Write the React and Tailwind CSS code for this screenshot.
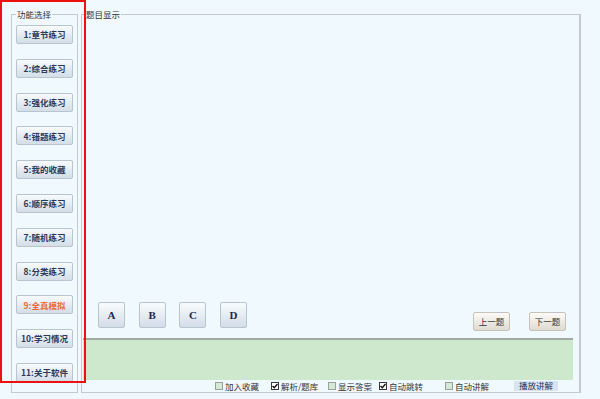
import React from "react";

const cjk = { fontFamily: '"Noto Sans CJK SC", "Noto Sans", sans-serif' };

const menu = [
  "1:章节练习",
  "2:综合练习",
  "3:强化练习",
  "4:错题练习",
  "5:我的收藏",
  "6:顺序练习",
  "7:随机练习",
  "8:分类练习",
  "9:全真模拟",
  "10:学习情况",
  "11:关于软件",
];

function Check({ checked }) {
  return (
    <span
      className={
        "flex h-[8px] w-[8px] shrink-0 items-center justify-center border " +
        (checked ? "border-[#3a3a3a] bg-white" : "border-[#9aa09a] bg-[#d5ead5]")
      }
    >
      {checked && (
        <svg width="6" height="6" viewBox="0 0 6 6">
          <path d="M0.5 3 L2.3 4.8 L5.5 1" stroke="#111" strokeWidth="1.4" fill="none" />
        </svg>
      )}
    </span>
  );
}

function Opt({ label, checked, w }) {
  return (
    <div className={"flex items-center gap-[2px] " + w}>
      <Check checked={checked} />
      <span className="text-[8.5px] leading-[12px] text-[#333]">{label}</span>
    </div>
  );
}

export default function App() {
  return (
    <div className="relative h-[399px] w-[600px] overflow-hidden bg-[#eff9fe]" style={cjk}>
      <div className="flex">
        <fieldset className="ml-[11px] mt-[8px] h-[385px] w-[66px] border border-[#c5cacd] px-[4px] pb-0 pt-0">
          <legend className="px-[1px] text-[8.5px] leading-[12px] text-[#333]">功能选择</legend>
          <div className="mt-[5px] flex flex-col gap-[14.8px]">
            {menu.map((m, i) => (
              <div
                key={m}
                className={
                  "flex h-[19px] w-[57px] items-center justify-center rounded-[2px] border border-[#b9c5ce] bg-gradient-to-b from-[#f8fbfd] to-[#d3dee7] text-[8.5px] font-bold " +
                  (i === 8 ? "text-[#f2683a]" : "text-[#2b3a5c]")
                }
              >
                {m}
              </div>
            ))}
          </div>
        </fieldset>
        <fieldset className="ml-[3px] mt-[8px] h-[385px] w-[500px] border border-r-2 border-[#c5cacd] pl-[3px] pr-0 pb-0 pt-0">
          <legend className="px-[1px] text-[8.5px] leading-[12px] text-[#333]">题目显示</legend>
          <div className="-ml-[3px] flex h-[372px] flex-col">
            <div className="flex-1" />
            <div className="flex items-start">
              <div className="ml-[16px] flex gap-[13.7px]">
                {["A", "B", "C", "D"].map((l) => (
                  <div
                    key={l}
                    className="flex h-[26px] w-[27px] items-center justify-center rounded-[2px] border border-[#b9c5ce] bg-gradient-to-b from-[#fafcfe] to-[#d2dde8] text-[11px] font-bold text-[#1b2850]"
                    style={{ fontFamily: '"Liberation Serif", serif' }}
                  >
                    {l}
                  </div>
                ))}
              </div>
              <div className="ml-auto mr-[13px] mt-[10px] flex gap-[19px]">
                {["上一题", "下一题"].map((t) => (
                  <div
                    key={t}
                    className="flex h-[19px] w-[37px] items-center justify-center rounded-[2px] border border-[#c8c3b9] bg-gradient-to-b from-[#fcfbf8] to-[#e0dbd1] text-[8.5px] text-[#333]"
                  >
                    {t}
                  </div>
                ))}
              </div>
            </div>
            <div className="ml-[1px] mr-[6px] mt-[7px] h-[42px] border-t-2 border-[#a2aaa2] bg-[#cde8cd]" />
            <div className="flex h-[12px] items-center pl-[133px]">
              <Opt label="加入收藏" w="w-[56px]" />
              <Opt label="解析/题库" checked w="w-[57px]" />
              <Opt label="显示答案" w="w-[51px]" />
              <Opt label="自动跳转" checked w="w-[66px]" />
              <Opt label="自动讲解" w="w-[69px]" />
              <div className="flex h-[11px] w-[45px] items-center justify-center border-r border-b border-[#f4f8fc] bg-[#d7e4f2] text-[8.5px] text-[#22365e]">
                播放讲解
              </div>
            </div>
          </div>
        </fieldset>
      </div>
      <div className="pointer-events-none absolute left-0 top-0 h-[383px] w-[86px] border-2 border-[#ee1111]" />
    </div>
  );
}
